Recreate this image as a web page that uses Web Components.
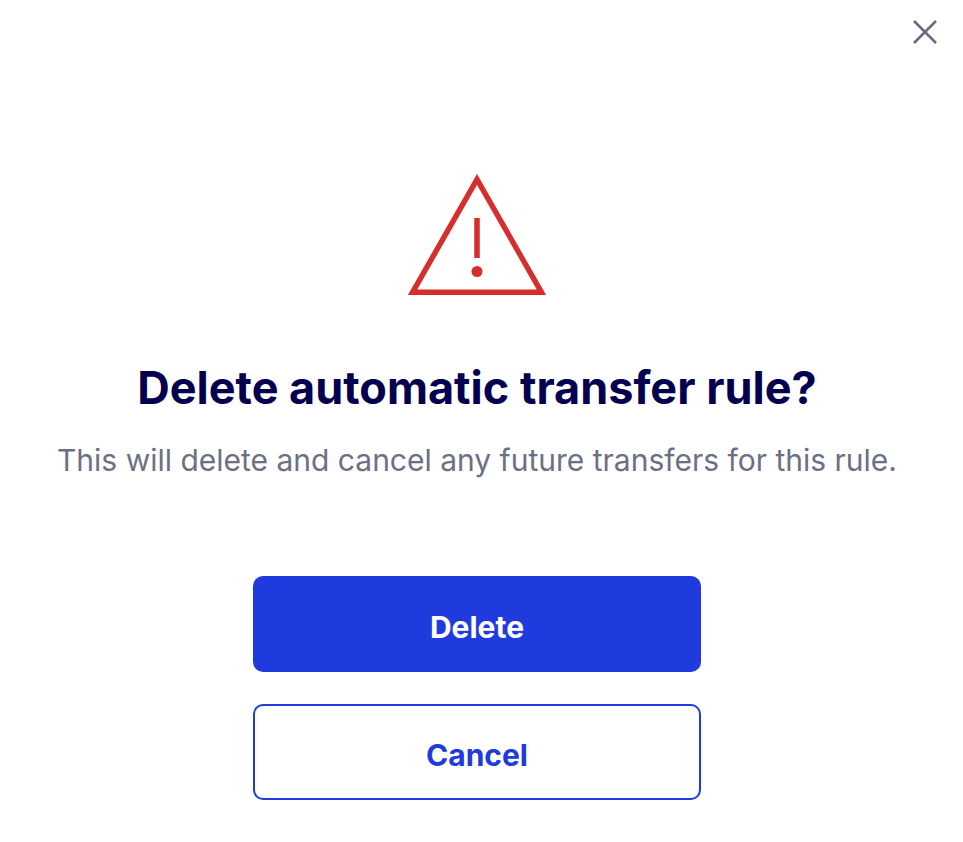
<!DOCTYPE html>
<html lang="en">
<head>
<meta charset="utf-8">
<meta name="viewport" content="width=device-width, initial-scale=1">
<title>Delete automatic transfer rule?</title>
<style>
  body { margin: 0; background: #fff; font-family: Inter, "Liberation Sans", sans-serif; }
</style>
</head>
<body>
<confirm-dialog>
  <warning-icon slot="icon"></warning-icon>
  <span slot="title">Delete automatic transfer rule?</span>
  <span slot="message">This will delete and cancel any future transfers for this rule.</span>
  <action-button slot="actions" variant="primary">Delete</action-button>
  <action-button slot="actions" variant="secondary">Cancel</action-button>
</confirm-dialog>
<script>
  class BaseElement extends HTMLElement {
    constructor() {
      super();
      this.attachShadow({ mode: "open" }).innerHTML = this.constructor.markup;
    }
  }

  class WarningIcon extends BaseElement {
    static markup = `
      <style>
        :host { display: block; width: 138px; height: 121px; }
        svg { display: block; width: 100%; height: 100%; }
      </style>
      <svg viewBox="0 0 138 121" fill="none" aria-hidden="true">
        <path d="M69 5.400 133.500 118.300H4.500Z" stroke="#d62d2d" stroke-width="5.400"/>
        <path d="M69 44V84" stroke="#d62d2d" stroke-width="5.500"/>
        <circle cx="69" cy="97.500" r="5.500" fill="#d62d2d"/>
      </svg>`;
  }
  customElements.define("warning-icon", WarningIcon);

  class CloseButton extends BaseElement {
    static markup = `
      <style>
        :host { display: block; }
        button { display: block; width: 32px; height: 32px; padding: 4px; border: 0; background: none; cursor: pointer; }
        svg { display: block; width: 24px; height: 24px; }
      </style>
      <button type="button" aria-label="Close">
        <svg viewBox="0 0 24 24" fill="none"><path d="M1 1 23 23M23 1 1 23" stroke="#666b80" stroke-width="2.600"/></svg>
      </button>`;
  }
  customElements.define("close-button", CloseButton);

  class ActionButton extends BaseElement {
    static markup = `
      <style>
        :host { display: block; }
        button {
          display: block; box-sizing: border-box; width: 100%; height: 96px;
          padding: 6px 0 0; border: 2px solid #203bdd; border-radius: 10px;
          background: #203bdd; color: #fff; font: 700 30px/36px Inter, "Liberation Sans", sans-serif; cursor: pointer;
        }
        :host([variant="secondary"]) button { background: #fff; color: #203bdd; }
      </style>
      <button type="button"><slot></slot></button>`;
  }
  customElements.define("action-button", ActionButton);

  class ConfirmDialog extends BaseElement {
    static markup = `
      <style>
        :host { display: block; }
        section { display: flex; flex-direction: column; padding: 16px 22px 42px; }
        header { display: flex; justify-content: flex-end; }
        .content { display: flex; flex-direction: column; align-items: center; padding: 126px 9px 0 0; text-align: center; }
        h1 { margin: 65px 0 0; color: #02004f; font-size: 45px; line-height: 56px; font-weight: 700; }
        p { margin: 24px 0 0; color: #6b7085; font-size: 30px; line-height: 40px; font-weight: 400; }
        .actions { display: flex; flex-direction: column; gap: 32px; width: 448px; max-width: 100%; margin-top: 96px; }
      </style>
      <section role="dialog" aria-labelledby="title" aria-describedby="message">
        <header><close-button></close-button></header>
        <div class="content">
          <slot name="icon"></slot>
          <h1 id="title"><slot name="title"></slot></h1>
          <p id="message"><slot name="message"></slot></p>
          <div class="actions"><slot name="actions"></slot></div>
        </div>
      </section>`;
  }
  customElements.define("confirm-dialog", ConfirmDialog);
</script>
</body>
</html>
